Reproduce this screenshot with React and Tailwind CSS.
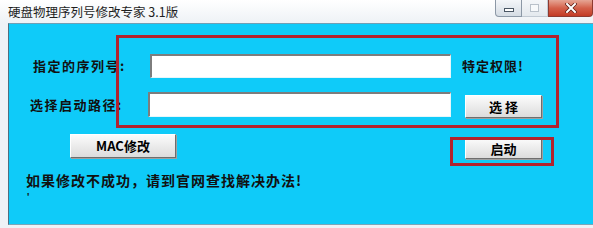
import React from "react";

const CJK = "font-['Noto_Sans_CJK_SC','Noto_Sans',sans-serif]";

function WinButton({ label, className = "" }) {
  return (
    <button
      className={`flex items-center justify-center bg-gradient-to-b from-[#fbfbfb] to-[#dcdcdc] border border-t-[#ffffff] border-l-[#ffffff] border-r-[#6e6e6e] border-b-[#6e6e6e] shadow-[1px_1px_0_#a0a0a0] text-[13px] font-bold text-black ${CJK} ${className}`}
    >
      {label}
    </button>
  );
}

function Field({ className = "" }) {
  return (
    <div
      className={`bg-white border-t-2 border-l-2 border-b border-r border-t-[#7d7d7d] border-l-[#7d7d7d] border-b-[#e6f6fb] border-r-[#e6f6fb] ${className}`}
    />
  );
}

export default function App() {
  return (
    <div className="w-[593px] h-[228px] flex flex-col overflow-hidden bg-[#eef2f6]">
      {/* title bar */}
      <div className="h-[23px] flex items-start bg-gradient-to-b from-[#ffffff] to-[#eef2f6]">
        <span className={`pl-[8px] pt-[3px] text-[12.5px] leading-[18px] text-[#1e1e1e] ${CJK}`}>
          硬盘物理序列号修改专家 3.1版
        </span>
        <div className="ml-auto flex h-[17px]">
          <div className="w-[27px] flex items-center justify-center rounded-bl-[4px] border border-t-0 border-[#8c98a6] bg-gradient-to-b from-[#f4f6f9] to-[#d5dce4]">
            <div className="w-[10px] h-[4px] mt-[4px] bg-white border border-[#4a5664]" />
          </div>
          <div className="w-[26px] flex items-center justify-center border-b border-r border-[#c2cad3] bg-gradient-to-b from-[#f4f6f9] to-[#e4e9ee]">
            <div className="w-[9px] h-[8px] border border-[#b9c1ca] bg-[#f7f9fb]" />
          </div>
          <div className="w-[45px] flex items-center justify-center rounded-br-[4px] border border-t-0 border-[#8e3a30] bg-gradient-to-b from-[#e5a595] via-[#d4604a] to-[#c23a24]">
            <svg width="12" height="10" viewBox="0 0 12 10">
              <path d="M2 1 L10 9 M10 1 L2 9" stroke="#5a1a12" strokeWidth="3.4" strokeLinecap="square" />
              <path d="M2 1 L10 9 M10 1 L2 9" stroke="#ffffff" strokeWidth="2" strokeLinecap="square" />
            </svg>
          </div>
        </div>
      </div>

      {/* body */}
      <div className="flex flex-1">
        <div className="w-[8px]" />
        <div className="relative flex-1 flex flex-col bg-[#0fcbf9] border-l border-t border-b border-l-[#4f6f80] border-t-[#6f9fb5] border-b-[#7aa6b8] pt-[30px]">
          {/* row 1 */}
          <div className="flex items-center h-[24px]">
            <span className={`pl-[24px] w-[141px] text-[13px] font-bold tracking-[1.5px] text-[#111] ${CJK}`}>
              指定的序列号:
            </span>
            <Field className="w-[301px] h-[24px]" />
            <span className={`ml-[11px] text-[13px] font-bold tracking-[1px] text-[#111] ${CJK}`}>
              特定权限!
            </span>
          </div>

          {/* row 2 */}
          <div className="flex items-start mt-[14px] h-[26px]">
            <span className={`pl-[21px] w-[139px] mt-[3px] text-[13px] font-bold tracking-[1.5px] text-[#111] ${CJK}`}>
              选择启动路径:
            </span>
            <Field className="w-[303px] h-[25px]" />
            <WinButton label="选 择" className="ml-[14px] mt-[3px] w-[77px] h-[23px]" />
          </div>

          {/* row 3 */}
          <div className="flex items-start mt-[16px]">
            <WinButton label="MAC修改" className="ml-[61px] w-[106px] h-[24px]" />
            <WinButton label="启动" className="ml-[289px] mt-[4px] w-[77px] h-[21px]" />
          </div>

          <p className={`mt-[12px] pl-[17px] text-[14px] leading-[18px] font-bold tracking-[1px] text-[#111] ${CJK}`}>
            如果修改不成功，请到官网查找解决办法!
          </p>
          <span className="mt-[4px] pl-[18px] text-[10px] leading-[10px] font-bold text-[#111] font-['Liberation_Sans',sans-serif]">
            '
          </span>

          {/* annotations */}
          <div className="absolute left-[107px] top-[11px] w-[443px] h-[93px] border-[3px] border-[#b1232f]" />
          <div className="absolute left-[441px] top-[113px] w-[104px] h-[29px] border-[3px] border-[#b1232f]" />
        </div>
      </div>
      <div className="h-[3px]" />
    </div>
  );
}
